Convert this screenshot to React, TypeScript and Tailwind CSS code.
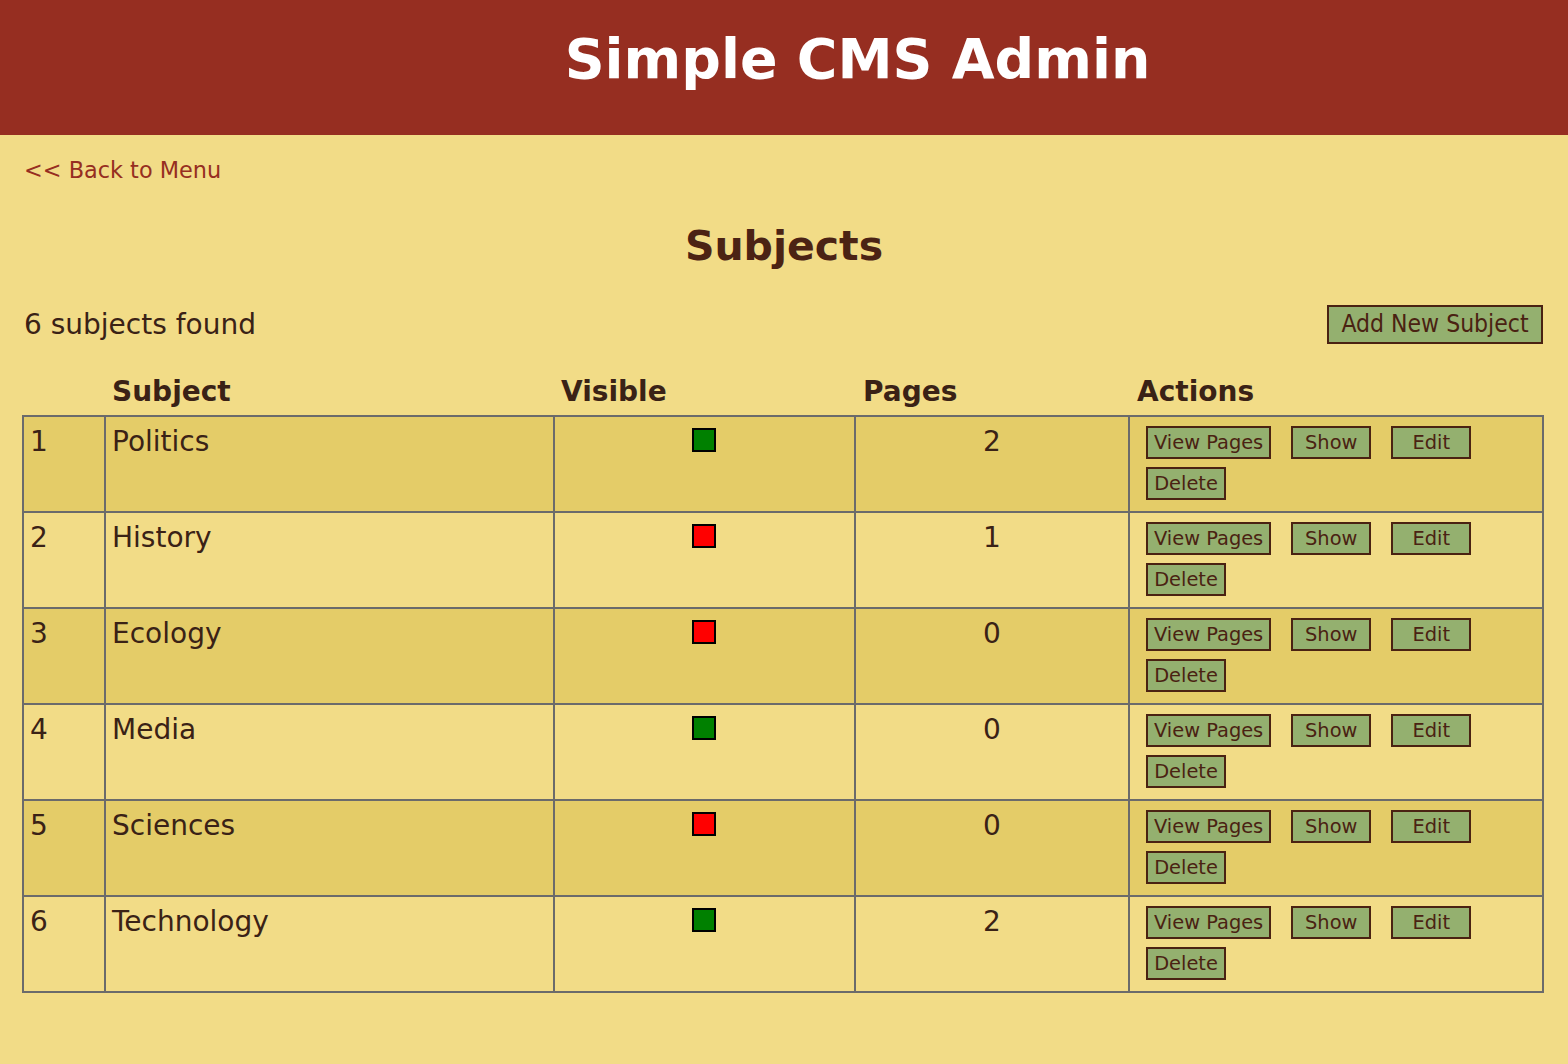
import React from "react";

const rows = [
  { id: 1, name: "Politics", visible: true, pages: 2 },
  { id: 2, name: "History", visible: false, pages: 1 },
  { id: 3, name: "Ecology", visible: false, pages: 0 },
  { id: 4, name: "Media", visible: true, pages: 0 },
  { id: 5, name: "Sciences", visible: false, pages: 0 },
  { id: 6, name: "Technology", visible: true, pages: 2 },
];

function SmallButton({ children }: { children: React.ReactNode }) {
  return (
    <button className="h-[33px] min-w-[80px] px-[6px] border-2 border-[#4a2212] bg-[#94b06f] text-[#4a2212] text-[19.4px] leading-none text-center [font-family:'DejaVu_Sans',sans-serif]">
      {children}
    </button>
  );
}

export default function App() {
  return (
    <div className="min-h-[1064px] bg-[#f2dc87] text-[#3a2216] [font-family:'DejaVu_Sans','Liberation_Sans',sans-serif]">
      <header className="h-[135px] bg-[#962e21] pt-[32px] pl-[147px] text-center">
        <h1 className="text-[55.4px] leading-none font-bold text-white">Simple CMS Admin</h1>
      </header>

      <main className="px-[22px]">
        <div className="mt-[22px] ml-[2px] text-[22.4px] leading-[26px]">
          <a href="#" className="text-[#962e21]">&lt;&lt; Back to Menu</a>
        </div>

        <h2 className="mt-[43px] text-center text-[41px] leading-none font-bold text-[#4b2314]">Subjects</h2>

        <div className="mt-[38px] flex items-start justify-between pr-[3px]">
          <div className="mt-[4px] ml-[2px] text-[28px] leading-[32px]">6 subjects found</div>
          <button className="w-[216px] h-[39px] border-2 border-[#4a2212] bg-[#94b06f] text-[#4a2212] text-[24.5px] leading-none text-center [font-family:'DejaVu_Sans_Condensed','DejaVu_Sans',sans-serif] [font-stretch:condensed]">
            Add New Subject
          </button>
        </div>

        <table className="mt-[32px] w-[1520px] table-fixed border-collapse text-[28px] leading-[32px]">
          <colgroup>
            <col className="w-[82px]" />
            <col className="w-[449px]" />
            <col className="w-[301px]" />
            <col className="w-[274px]" />
            <col className="w-[414px]" />
          </colgroup>
          <thead>
            <tr className="font-bold">
              <th className="pb-[7px] pl-[6px] text-left"></th>
              <th className="pb-[7px] pl-[7px] text-left">Subject</th>
              <th className="pb-[7px] pl-[7px] text-left">Visible</th>
              <th className="pb-[7px] pl-[8px] text-left">Pages</th>
              <th className="pb-[7px] pl-[8px] text-left">Actions</th>
            </tr>
          </thead>
          <tbody>
            {rows.map((r, i) => (
              <tr key={r.id} className={i % 2 === 0 ? "bg-[#e4cc68]" : "bg-[#f2dc87]"}>
                <td className="border-2 border-[#6b6b6b] align-top pt-[9px] pl-[6px]">{r.id}</td>
                <td className="border-2 border-[#6b6b6b] align-top pt-[9px] pl-[6px]">{r.name}</td>
                <td className="border-2 border-[#6b6b6b] align-top pt-[9px] pr-[2px]">
                  <div className="flex justify-center pt-[2px]">
                    <span
                      className={
                        "block w-[24px] h-[24px] border-2 border-black " +
                        (r.visible ? "bg-[#008000]" : "bg-[#ff0000]")
                      }
                    />
                  </div>
                </td>
                <td className="border-2 border-[#6b6b6b] align-top pt-[9px] text-center">{r.pages}</td>
                <td className="border-2 border-[#6b6b6b] align-top pt-[9px] pb-[11px] pl-[16px] pr-[10px]">
                  <div className="flex flex-wrap gap-x-[20px] gap-y-[8px]">
                    <SmallButton>View Pages</SmallButton>
                    <SmallButton>Show</SmallButton>
                    <SmallButton>Edit</SmallButton>
                    <SmallButton>Delete</SmallButton>
                  </div>
                </td>
              </tr>
            ))}
          </tbody>
        </table>
      </main>
    </div>
  );
}
